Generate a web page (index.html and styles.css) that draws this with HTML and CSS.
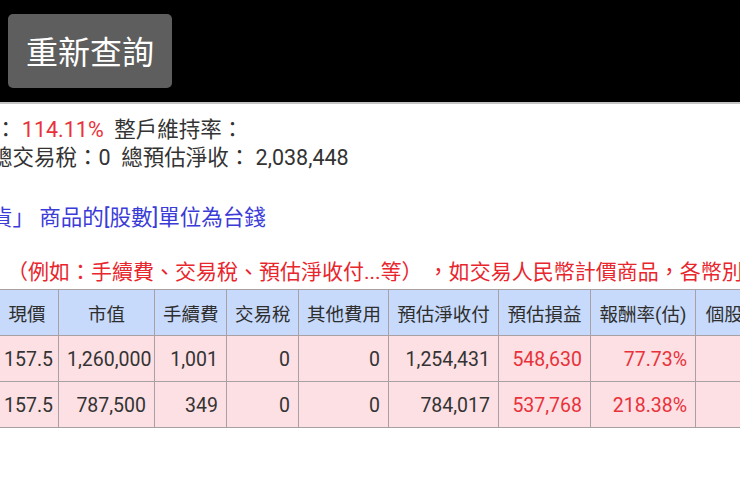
FILE: index.html
```html
<!DOCTYPE html>
<html lang="zh-Hant">
<head>
<meta charset="utf-8">
<link rel="stylesheet" href="styles.css">
</head>
<body>
<header class="topbar">
  <button class="btn-requery">重新查詢</button>
</header>
<main class="content">
  <div class="summary">
    <div class="line line-first">：&nbsp;<span class="red">114.11%</span>&nbsp;&nbsp;整戶維持率：</div>
    <div class="line line-second">總交易稅：0&nbsp; 總預估淨收：&nbsp;2,038,448</div>
  </div>
  <div class="note-blue">貨」&nbsp;商品的[股數]單位為台錢</div>
  <div class="note-red">（例如：手續費、交易稅、預估淨收付...等）&nbsp;，如交易人民幣計價商品，各幣別金額皆以台幣顯示</div>
  <table class="grid">
    <colgroup>
      <col class="c0"><col class="c1"><col class="c2"><col class="c3"><col class="c4"><col class="c5"><col class="c6"><col class="c7"><col class="c8">
    </colgroup>
    <thead>
      <tr>
        <th>現價</th><th>市值</th><th>手續費</th><th>交易稅</th><th>其他費用</th><th>預估淨收付</th><th>預估損益</th><th>報酬率(估)</th><th>個股維持率</th>
      </tr>
    </thead>
    <tbody>
      <tr>
        <td>157.5</td><td>1,260,000</td><td>1,001</td><td>0</td><td>0</td><td>1,254,431</td><td class="red">548,630</td><td class="red">77.73%</td><td></td>
      </tr>
      <tr>
        <td>157.5</td><td>787,500</td><td>349</td><td>0</td><td>0</td><td>784,017</td><td class="red">537,768</td><td class="red">218.38%</td><td></td>
      </tr>
    </tbody>
  </table>
</main>
</body>
</html>
```

FILE: styles.css
```css
html, body {
  margin: 0;
  padding: 0;
  overflow: hidden;
  background: #ffffff;
  width: 740px;
  height: 483px;
}
body {
  font-family: Roboto, "Noto Sans CJK TC", sans-serif;
  color: #333333;
}
.topbar {
  height: 104px;
  background: #000000;
  border-bottom: 2px solid #c4c4c4;
  display: flex;
  align-items: flex-start;
  padding: 14px 0 0 8px;
  box-sizing: border-box;
}
.btn-requery {
  width: 164px;
  height: 74px;
  background: #5e5e5e;
  color: #ffffff;
  border: none;
  border-radius: 5px;
  font-family: Roboto, "Noto Sans CJK TC", sans-serif;
  font-size: 32px;
  padding: 0 0 2px 0;
  display: flex;
  align-items: center;
  justify-content: center;
}
.content {
  width: 900px;
  padding-top: 12px;
}
.line {
  font-size: 21.5px;
  line-height: 28px;
  white-space: nowrap;
  color: #333333;
}
.line-first {
  margin-left: -5px;
}
.line-second {
  margin-left: -9px;
}
.red {
  color: #e8323a;
}
.note-blue {
  margin-top: 32px;
  margin-left: -9px;
  font-size: 21.5px;
  line-height: 28px;
  color: #3b3bd8;
  white-space: nowrap;
}
.note-red {
  margin-top: 26px;
  margin-left: 7px;
  font-size: 21px;
  line-height: 28px;
  color: #e8262e;
  white-space: nowrap;
}
.grid {
  margin-top: 3px;
  margin-left: -5px;
  border-collapse: collapse;
  table-layout: fixed;
  width: 813px;
}
.c0 { width: 63px; }
.c1 { width: 96px; }
.c2 { width: 72px; }
.c3 { width: 72px; }
.c4 { width: 90px; }
.c5 { width: 110px; }
.c6 { width: 92px; }
.c7 { width: 105px; }
.c8 { width: 113px; }
.grid th, .grid td {
  border: 1px solid #a8a0a2;
  height: 46px;
  padding: 0 8px;
  white-space: nowrap;
  overflow: hidden;
  box-sizing: border-box;
}
.grid th {
  background: #c7dafb;
  font-size: 18.5px;
  font-weight: normal;
  color: #2e2e2e;
  text-align: center;
}
.grid td {
  background: #fde0e4;
  font-size: 19.5px;
  color: #333333;
  text-align: right;
  padding-top: 2px;
}
.grid td.red {
  color: #e8323a;
}
```
